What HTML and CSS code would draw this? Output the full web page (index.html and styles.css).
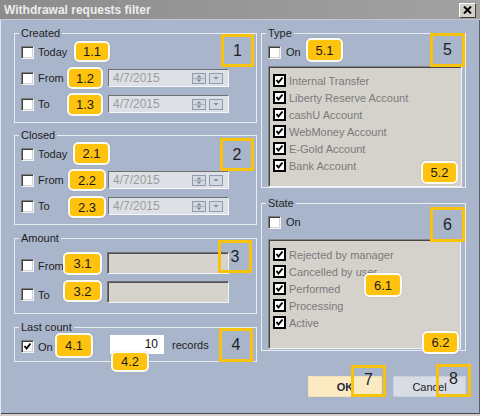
FILE: index.html
```html
<!DOCTYPE html>
<html>
<head>
<meta charset="utf-8">
<title>Withdrawal requests filter</title>
<link rel="stylesheet" href="styles.css">
</head>
<body>
<div class="window">
  <div class="titlebar">
    <span class="title">Withdrawal requests filter</span>
    <span class="close"><svg width="9" height="8" viewBox="0 0 9 8"><path d="M1 0.5 L8 7.5 M8 0.5 L1 7.5" stroke="#000" stroke-width="2"/></svg></span>
  </div>
  <div class="body">
    <div class="col">
      <div class="group">
        <div class="legend">Created</div>
        <div class="rows">
          <div class="row"><label class="chk"><span class="cb"></span>Today</label></div>
          <div class="row"><label class="chk"><span class="cb"></span>From</label>
            <div class="date"><span class="dtext">4/7/2015</span>
              <svg class="spin" width="14" height="11" viewBox="0 0 14 11"><rect x="0.5" y="0.5" width="13" height="10" fill="#d3d8e1" stroke="#8f9aae"/><path d="M0.5 5.5 H13.5" stroke="#a8b1c0"/><path d="M4.5 4.5 L7 2 L9.5 4.5Z M4.5 6.5 L7 9 L9.5 6.5Z" fill="#7f899b"/></svg>
              <svg class="drop" width="14" height="11" viewBox="0 0 14 11"><rect x="0.5" y="0.5" width="13" height="10" fill="#d3d8e1" stroke="#8f9aae"/><path d="M4.5 4 L7 6.5 L9.5 4Z" fill="#7f899b"/></svg>
            </div>
          </div>
          <div class="row"><label class="chk"><span class="cb"></span>To</label>
            <div class="date"><span class="dtext">4/7/2015</span>
              <svg class="spin" width="14" height="11" viewBox="0 0 14 11"><rect x="0.5" y="0.5" width="13" height="10" fill="#d3d8e1" stroke="#8f9aae"/><path d="M0.5 5.5 H13.5" stroke="#a8b1c0"/><path d="M4.5 4.5 L7 2 L9.5 4.5Z M4.5 6.5 L7 9 L9.5 6.5Z" fill="#7f899b"/></svg>
              <svg class="drop" width="14" height="11" viewBox="0 0 14 11"><rect x="0.5" y="0.5" width="13" height="10" fill="#d3d8e1" stroke="#8f9aae"/><path d="M4.5 4 L7 6.5 L9.5 4Z" fill="#7f899b"/></svg>
            </div>
          </div>
        </div>
      </div>

      <div class="group g-closed">
        <div class="legend">Closed</div>
        <div class="rows">
          <div class="row"><label class="chk"><span class="cb"></span>Today</label></div>
          <div class="row"><label class="chk"><span class="cb"></span>From</label>
            <div class="date"><span class="dtext">4/7/2015</span>
              <svg class="spin" width="14" height="11" viewBox="0 0 14 11"><rect x="0.5" y="0.5" width="13" height="10" fill="#d3d8e1" stroke="#8f9aae"/><path d="M0.5 5.5 H13.5" stroke="#a8b1c0"/><path d="M4.5 4.5 L7 2 L9.5 4.5Z M4.5 6.5 L7 9 L9.5 6.5Z" fill="#7f899b"/></svg>
              <svg class="drop" width="14" height="11" viewBox="0 0 14 11"><rect x="0.5" y="0.5" width="13" height="10" fill="#d3d8e1" stroke="#8f9aae"/><path d="M4.5 4 L7 6.5 L9.5 4Z" fill="#7f899b"/></svg>
            </div>
          </div>
          <div class="row"><label class="chk"><span class="cb"></span>To</label>
            <div class="date"><span class="dtext">4/7/2015</span>
              <svg class="spin" width="14" height="11" viewBox="0 0 14 11"><rect x="0.5" y="0.5" width="13" height="10" fill="#d3d8e1" stroke="#8f9aae"/><path d="M0.5 5.5 H13.5" stroke="#a8b1c0"/><path d="M4.5 4.5 L7 2 L9.5 4.5Z M4.5 6.5 L7 9 L9.5 6.5Z" fill="#7f899b"/></svg>
              <svg class="drop" width="14" height="11" viewBox="0 0 14 11"><rect x="0.5" y="0.5" width="13" height="10" fill="#d3d8e1" stroke="#8f9aae"/><path d="M4.5 4 L7 6.5 L9.5 4Z" fill="#7f899b"/></svg>
            </div>
          </div>
        </div>
      </div>

      <div class="group g-amount">
        <div class="legend">Amount</div>
        <div class="rows rows-amount">
          <div class="row row-amount"><label class="chk"><span class="cb"></span>From</label><div class="field"></div></div>
          <div class="row row-amount"><label class="chk"><span class="cb"></span>To</label><div class="field"></div></div>
        </div>
      </div>

      <div class="group g-last">
        <div class="legend">Last count</div>
        <div class="rows rows-last">
          <div class="row row-last">
            <label class="chk"><span class="cb"><svg width="11" height="11" viewBox="0 0 11 11"><path d="M2.5 5 L4.5 7.5 L8.5 2.5" stroke="#000" stroke-width="1.8" fill="none"/></svg></span>On</label>
            <div class="count">10</div>
            <span class="records">records</span>
          </div>
        </div>
      </div>
    </div>

    <div class="col">
      <div class="group">
        <div class="legend">Type</div>
        <div class="onrow"><label class="chk"><span class="cb"></span>On</label></div>
        <div class="list">
          <div class="item"><svg width="13" height="13" viewBox="0 0 13 13"><rect x="1" y="1" width="11" height="11" fill="#fff" stroke="#000" stroke-width="2"/><path d="M3.5 6 L5.5 8.5 L9.5 3.5" stroke="#000" stroke-width="2" fill="none"/></svg>Internal Transfer</div>
          <div class="item"><svg width="13" height="13" viewBox="0 0 13 13"><rect x="1" y="1" width="11" height="11" fill="#fff" stroke="#000" stroke-width="2"/><path d="M3.5 6 L5.5 8.5 L9.5 3.5" stroke="#000" stroke-width="2" fill="none"/></svg>Liberty Reserve Account</div>
          <div class="item"><svg width="13" height="13" viewBox="0 0 13 13"><rect x="1" y="1" width="11" height="11" fill="#fff" stroke="#000" stroke-width="2"/><path d="M3.5 6 L5.5 8.5 L9.5 3.5" stroke="#000" stroke-width="2" fill="none"/></svg>cashU Account</div>
          <div class="item"><svg width="13" height="13" viewBox="0 0 13 13"><rect x="1" y="1" width="11" height="11" fill="#fff" stroke="#000" stroke-width="2"/><path d="M3.5 6 L5.5 8.5 L9.5 3.5" stroke="#000" stroke-width="2" fill="none"/></svg>WebMoney Account</div>
          <div class="item"><svg width="13" height="13" viewBox="0 0 13 13"><rect x="1" y="1" width="11" height="11" fill="#fff" stroke="#000" stroke-width="2"/><path d="M3.5 6 L5.5 8.5 L9.5 3.5" stroke="#000" stroke-width="2" fill="none"/></svg>E-Gold Account</div>
          <div class="item"><svg width="13" height="13" viewBox="0 0 13 13"><rect x="1" y="1" width="11" height="11" fill="#fff" stroke="#000" stroke-width="2"/><path d="M3.5 6 L5.5 8.5 L9.5 3.5" stroke="#000" stroke-width="2" fill="none"/></svg>Bank Account</div>
        </div>
      </div>

      <div class="group g-state">
        <div class="legend">State</div>
        <div class="onrow"><label class="chk"><span class="cb"></span>On</label></div>
        <div class="list list-state">
          <div class="item"><svg width="13" height="13" viewBox="0 0 13 13"><rect x="1" y="1" width="11" height="11" fill="#fff" stroke="#000" stroke-width="2"/><path d="M3.5 6 L5.5 8.5 L9.5 3.5" stroke="#000" stroke-width="2" fill="none"/></svg>Rejected by manager</div>
          <div class="item"><svg width="13" height="13" viewBox="0 0 13 13"><rect x="1" y="1" width="11" height="11" fill="#fff" stroke="#000" stroke-width="2"/><path d="M3.5 6 L5.5 8.5 L9.5 3.5" stroke="#000" stroke-width="2" fill="none"/></svg>Cancelled by user</div>
          <div class="item"><svg width="13" height="13" viewBox="0 0 13 13"><rect x="1" y="1" width="11" height="11" fill="#fff" stroke="#000" stroke-width="2"/><path d="M3.5 6 L5.5 8.5 L9.5 3.5" stroke="#000" stroke-width="2" fill="none"/></svg>Performed</div>
          <div class="item"><svg width="13" height="13" viewBox="0 0 13 13"><rect x="1" y="1" width="11" height="11" fill="#fff" stroke="#000" stroke-width="2"/><path d="M3.5 6 L5.5 8.5 L9.5 3.5" stroke="#000" stroke-width="2" fill="none"/></svg>Processing</div>
          <div class="item"><svg width="13" height="13" viewBox="0 0 13 13"><rect x="1" y="1" width="11" height="11" fill="#fff" stroke="#000" stroke-width="2"/><path d="M3.5 6 L5.5 8.5 L9.5 3.5" stroke="#000" stroke-width="2" fill="none"/></svg>Active</div>
        </div>
      </div>

      <div class="buttons">
        <button class="btn btn-ok">OK</button>
        <button class="btn btn-cancel">Cancel</button>
      </div>
    </div>
  </div>

  <div class="badge b11">1.1</div>
  <div class="badge b12">1.2</div>
  <div class="badge b13">1.3</div>
  <div class="badge b21">2.1</div>
  <div class="badge b22">2.2</div>
  <div class="badge b23">2.3</div>
  <div class="badge b31">3.1</div>
  <div class="badge b32">3.2</div>
  <div class="badge b41">4.1</div>
  <div class="badge b42">4.2</div>
  <div class="badge b51">5.1</div>
  <div class="badge b52">5.2</div>
  <div class="badge b61">6.1</div>
  <div class="badge b62">6.2</div>

  <div class="num n1">1</div>
  <div class="num n2">2</div>
  <div class="num n3">3</div>
  <div class="num n4">4</div>
  <div class="num n5">5</div>
  <div class="num n6">6</div>
  <div class="num n7">7</div>
  <div class="num n8">8</div>
</div>
</body>
</html>
```
FILE: styles.css
```css
* { box-sizing: border-box; }
html, body { margin: 0; padding: 0; }
body {
  width: 480px; height: 416px; overflow: hidden;
  background: #d4d0c8;
  font-family: "Liberation Sans", Arial, sans-serif;
  font-size: 11px; color: #1e1e1e;
}
.window {
  position: relative;
  width: 480px; height: 414px;
  background: #a9b5ca;
  box-shadow: inset 1px 0 0 #e2e6ee, inset -1px 0 0 #5a5f68, inset 0 -1px 0 #44474d;
}
.titlebar {
  height: 20px;
  display: flex; align-items: center; justify-content: space-between;
  padding: 1px 4px 0 4px;
  background: linear-gradient(to right, #8c8c8c, #a2a2a2);
  border-bottom: 1px solid #c3c9d4;
}
.title { font-weight: bold; font-size: 12px; color: #ececec; }
.close {
  width: 17px; height: 15px;
  display: flex; align-items: center; justify-content: center;
  background: #d4d0c8;
  border: 1px solid; border-color: #fff #404040 #404040 #fff;
}
.body {
  display: grid;
  grid-template-columns: 243px 205px;
  column-gap: 4px;
  padding: 13px 0 0 14px;
  align-items: start;
}
.col { display: flex; flex-direction: column; }
.group { border: 1px solid #e9edf3; }
.g-closed { margin-top: 12px; }
.g-amount { margin-top: 13px; }
.g-last { margin-top: 13px; }
.g-state { margin-top: 15px; }
.legend {
  width: max-content;
  height: 14px; line-height: 14px;
  margin: -8px 0 -1px 4px;
  padding: 0 2px;
  background: #a9b5ca;
  color: #1e1e1e;
}
.rows { padding: 0 0 5px 6px; }
.row {
  display: grid;
  grid-template-columns: 87px 121px;
  align-items: center;
  height: 26px;
}
.chk { display: flex; align-items: center; gap: 4px; }
.cb {
  width: 13px; height: 13px;
  display: flex; align-items: center; justify-content: center;
  background: #fff;
  border: 1px solid; border-color: #7c7c7c #f4f4f4 #f4f4f4 #7c7c7c;
  box-shadow: inset 1px 1px 0 #3e3e3e, inset -1px -1px 0 #d6d3ce;
}
.date {
  height: 18px;
  display: flex; align-items: center;
  padding-left: 4px;
  background: #dde0e6;
  border: 1px solid; border-color: #6f6f6f #f6f7f9 #f6f7f9 #6f6f6f;
  color: #9c9c9c; font-size: 12px;
}
.spin { margin-left: auto; }
.drop { margin: 0 5px 0 3px; }

.rows-amount { padding: 8px 0 10px 6px; display: grid; row-gap: 7px; }
.row-amount { height: 22px; grid-template-columns: 86px 122px; }
.row-amount .chk { margin-top: 5px; }
.field {
  height: 22px;
  background: #d6d3cc;
  border: 1px solid; border-color: #707070 #f4f4f4 #f4f4f4 #707070;
  box-shadow: inset 1px 1px 0 #505050;
}
.rows-last { padding: 2px 0 7px 6px; }
.row-last { height: 19px; grid-template-columns: 89px 54px auto; }
.row-last .chk { margin-top: 4px; }
.count {
  height: 19px; line-height: 19px;
  background: #fff;
  text-align: right; padding-right: 6px;
  font-size: 12px; color: #111;
}
.records { margin-left: 8px; }

.onrow { height: 26px; display: flex; align-items: center; padding-left: 6px; }
.onrow .chk { gap: 5px; }
.list {
  margin: 1px 3px 0 6px;
  height: 121px;
  padding: 5px 0 0 4px;
  background: #d5d2cc;
  border: 1px solid; border-color: #858585 #f4f4f4 #f4f4f4 #858585;
  box-shadow: inset 1px 1px 0 #454545;
}
.list-state { margin: 4px 4px 1px 6px; height: 110px; padding-top: 6px; }
.item {
  height: 17px;
  display: flex; align-items: center; gap: 3px;
  color: #7a7a7a;
}
.buttons {
  display: flex; justify-content: flex-end; gap: 11px;
  margin-top: 25px;
}
.btn {
  height: 21px; padding: 0;
  font-family: "Liberation Sans", Arial, sans-serif; font-size: 11px;
  border: 1px solid #c9d0db;
}
.btn-ok { width: 74px; background: #fcebc2; font-weight: bold; color: #1d2740; border-color: #f3e2b8; }
.btn-cancel { width: 73px; background: #d7dce5; color: #222; }

.badge {
  position: absolute;
  display: flex; align-items: center; justify-content: center;
  background: #ffc30e;
  border: 2px solid #fbfbf6;
  border-radius: 5px;
  font-size: 13px; color: #1a1a1a;
  box-shadow: 0 0 1px rgba(0,0,0,.35);
}
.b11 { left: 74px; top: 41px; width: 36px; height: 21px; }
.b12 { left: 67px; top: 67px; width: 36px; height: 22px; }
.b13 { left: 67px; top: 93px; width: 36px; height: 23px; }
.b21 { left: 73px; top: 142px; width: 37px; height: 23px; }
.b22 { left: 68px; top: 169px; width: 38px; height: 22px; }
.b23 { left: 68px; top: 196px; width: 38px; height: 22px; }
.b31 { left: 63px; top: 252px; width: 39px; height: 23px; }
.b32 { left: 63px; top: 280px; width: 39px; height: 22px; }
.b41 { left: 55px; top: 333px; width: 38px; height: 25px; }
.b42 { left: 111px; top: 351px; width: 38px; height: 21px; }
.b51 { left: 306px; top: 38px; width: 37px; height: 24px; }
.b52 { left: 421px; top: 161px; width: 37px; height: 23px; }
.b61 { left: 364px; top: 273px; width: 38px; height: 24px; }
.b62 { left: 422px; top: 331px; width: 37px; height: 23px; }

.num {
  position: absolute;
  display: flex; align-items: center; justify-content: center;
  border: 3px solid #f8c30a;
  font-size: 16px; color: #222;
}
.n1 { left: 221px; top: 34px; width: 33px; height: 33px; }
.n2 { left: 220px; top: 138px; width: 34px; height: 33px; }
.n3 { left: 218px; top: 240px; width: 34px; height: 33px; }
.n4 { left: 219px; top: 328px; width: 34px; height: 34px; }
.n5 { left: 430px; top: 33px; width: 35px; height: 34px; }
.n6 { left: 430px; top: 207px; width: 35px; height: 35px; }
.n7 { left: 351px; top: 365px; width: 35px; height: 32px; align-items: flex-start; padding-top: 3px; }
.n8 { left: 436px; top: 364px; width: 35px; height: 33px; align-items: flex-start; padding-top: 3px; }
```
